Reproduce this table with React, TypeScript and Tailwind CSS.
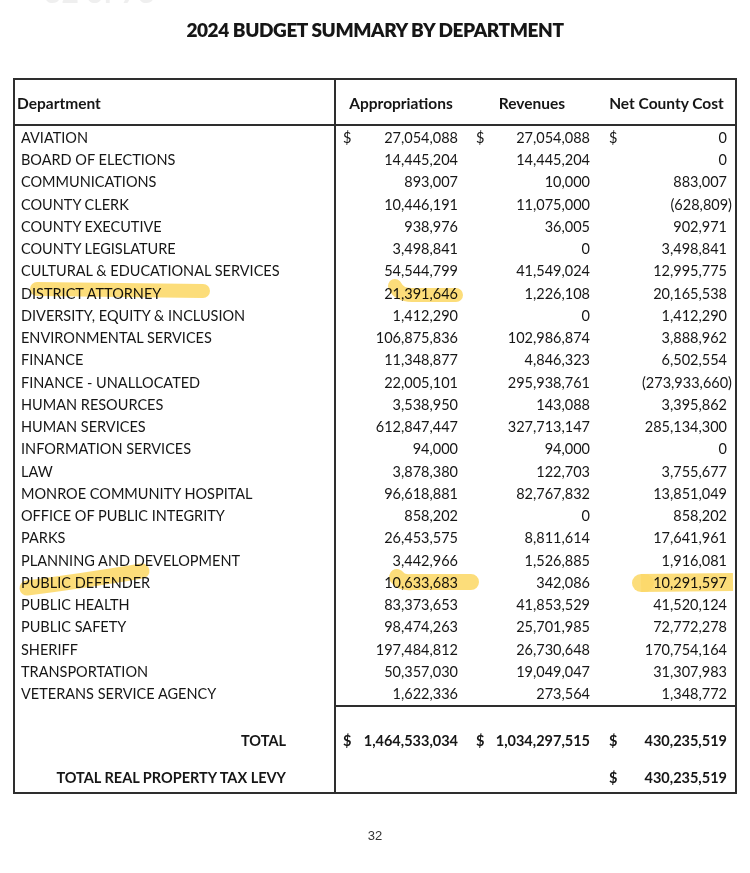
import React from 'react'

type Row = [string, string, string, string]

const rows: Row[] = [
  ['AVIATION', '27,054,088', '27,054,088', '0'],
  ['BOARD OF ELECTIONS', '14,445,204', '14,445,204', '0'],
  ['COMMUNICATIONS', '893,007', '10,000', '883,007'],
  ['COUNTY CLERK', '10,446,191', '11,075,000', '(628,809)'],
  ['COUNTY EXECUTIVE', '938,976', '36,005', '902,971'],
  ['COUNTY LEGISLATURE', '3,498,841', '0', '3,498,841'],
  ['CULTURAL & EDUCATIONAL SERVICES', '54,544,799', '41,549,024', '12,995,775'],
  ['DISTRICT ATTORNEY', '21,391,646', '1,226,108', '20,165,538'],
  ['DIVERSITY, EQUITY & INCLUSION', '1,412,290', '0', '1,412,290'],
  ['ENVIRONMENTAL SERVICES', '106,875,836', '102,986,874', '3,888,962'],
  ['FINANCE', '11,348,877', '4,846,323', '6,502,554'],
  ['FINANCE - UNALLOCATED', '22,005,101', '295,938,761', '(273,933,660)'],
  ['HUMAN RESOURCES', '3,538,950', '143,088', '3,395,862'],
  ['HUMAN SERVICES', '612,847,447', '327,713,147', '285,134,300'],
  ['INFORMATION SERVICES', '94,000', '94,000', '0'],
  ['LAW', '3,878,380', '122,703', '3,755,677'],
  ['MONROE COMMUNITY HOSPITAL', '96,618,881', '82,767,832', '13,851,049'],
  ['OFFICE OF PUBLIC INTEGRITY', '858,202', '0', '858,202'],
  ['PARKS', '26,453,575', '8,811,614', '17,641,961'],
  ['PLANNING AND DEVELOPMENT', '3,442,966', '1,526,885', '1,916,081'],
  ['PUBLIC DEFENDER', '10,633,683', '342,086', '10,291,597'],
  ['PUBLIC HEALTH', '83,373,653', '41,853,529', '41,520,124'],
  ['PUBLIC SAFETY', '98,474,263', '25,701,985', '72,772,278'],
  ['SHERIFF', '197,484,812', '26,730,648', '170,754,164'],
  ['TRANSPORTATION', '50,357,030', '19,049,047', '31,307,983'],
  ['VETERANS SERVICE AGENCY', '1,622,336', '273,564', '1,348,772'],
]

// accounting style: ")" hangs past the right edge of the digits
function Amount({ value }: { value: string }) {
  if (value.startsWith('(')) {
    return <span className="-mr-[5px]">{value}</span>
  }
  return <span>{value}</span>
}

function MoneyCells({ values, dollar, bold }: { values: string[]; dollar?: boolean; bold?: boolean }) {
  const sign = (v: string) => (dollar && v ? '$' : '')
  return (
    <div className={`flex flex-1 items-center ${bold ? 'font-bold' : ''}`}>
      <div className="w-[130px] flex justify-between pl-[7px] pr-[8px]">
        <span>{sign(values[0])}</span>
        <Amount value={values[0]} />
      </div>
      <div className="w-[132px] flex justify-between pl-[10px] pr-[8px]">
        <span>{sign(values[1])}</span>
        <Amount value={values[1]} />
      </div>
      <div className="flex-1 flex justify-between pl-[11px] pr-[8px]">
        <span>{sign(values[2])}</span>
        <Amount value={values[2]} />
      </div>
    </div>
  )
}

function Highlights() {
  return (
    <svg
      className="absolute inset-0 pointer-events-none mix-blend-multiply"
      width="750"
      height="873"
      viewBox="0 0 750 873"
    >
      <g fill="none" stroke="#fcd96c" strokeLinecap="round" strokeOpacity="0.9">
        <path d="M37 289 Q120 290 203 291" strokeWidth="14" />
        <path d="M395 286 Q399 295 412 295 L456 295" strokeWidth="14" />
        <path d="M27 588 Q82 581 142 571" strokeWidth="15" />
        <path d="M397 577 Q401 583 412 582 L471 582" strokeWidth="16" />
        <path d="M641 583 L733 582" strokeWidth="18" strokeLinecap="butt" />
        <path d="M641 583 L645 583" strokeWidth="18" />
      </g>
    </svg>
  )
}

export default function App() {
  return (
    <div className="relative w-[750px] h-[873px] bg-white text-[#161616] font-['Lato',sans-serif] overflow-hidden">
      <div className="h-[5px] overflow-hidden">
        <div className="-mt-[24px] pl-[44px] text-[30px] font-bold text-[#efefef] leading-[30px]">32 of 73</div>
      </div>

      <h1 className="mt-[13px] text-center text-[19px] leading-[24px] font-extrabold tracking-[-0.4px]">
        2024 BUDGET SUMMARY BY DEPARTMENT
      </h1>

      <div className="mt-[36px] ml-[13px] w-[724px] border-2 border-[#2e2e2e] text-[14.5px]">
        <div className="flex h-[46px] items-center border-b-2 border-[#2e2e2e] font-bold text-[15.5px]">
          <div className="w-[321px] h-full flex items-center pl-[2px] pt-[3px] border-r-2 border-[#2e2e2e]">
            Department
          </div>
          <div className="flex flex-1 pt-[3px]">
            <div className="w-[130px] text-center">Appropriations</div>
            <div className="w-[132px] text-center">Revenues</div>
            <div className="flex-1 text-center">Net County Cost</div>
          </div>
        </div>

        {rows.map(([name, app, rev, net], i) => (
          <div key={name} className="flex h-[22.25px] leading-none">
            <div className="w-[321px] flex items-center pl-[6px] pt-[2px] border-r-2 border-[#2e2e2e]">{name}</div>
            <div className="flex flex-1 pt-[2px]">
              <MoneyCells values={[app, rev, net]} dollar={i === 0} />
            </div>
          </div>
        ))}

        <div className="flex">
          <div className="w-[321px] border-r-2 border-[#2e2e2e] font-bold text-right pr-[48px] pt-[25px] pb-[3px]">
            <div className="h-[22px] flex items-center justify-end">TOTAL</div>
            <div className="h-[22px] mt-[15px] flex items-center justify-end">TOTAL REAL PROPERTY TAX LEVY</div>
          </div>
          <div className="flex-1 border-t-2 border-[#2e2e2e] pt-[23px]">
            <div className="h-[22px] flex items-center">
              <MoneyCells values={['1,464,533,034', '1,034,297,515', '430,235,519']} dollar bold />
            </div>
            <div className="h-[22px] mt-[15px] flex items-center">
              <MoneyCells values={['', '', '430,235,519']} dollar bold />
            </div>
          </div>
        </div>
      </div>

      <div className="mt-[32px] text-center text-[13px] text-[#333] font-['Liberation_Sans',sans-serif]">32</div>

      <Highlights />
    </div>
  )
}
